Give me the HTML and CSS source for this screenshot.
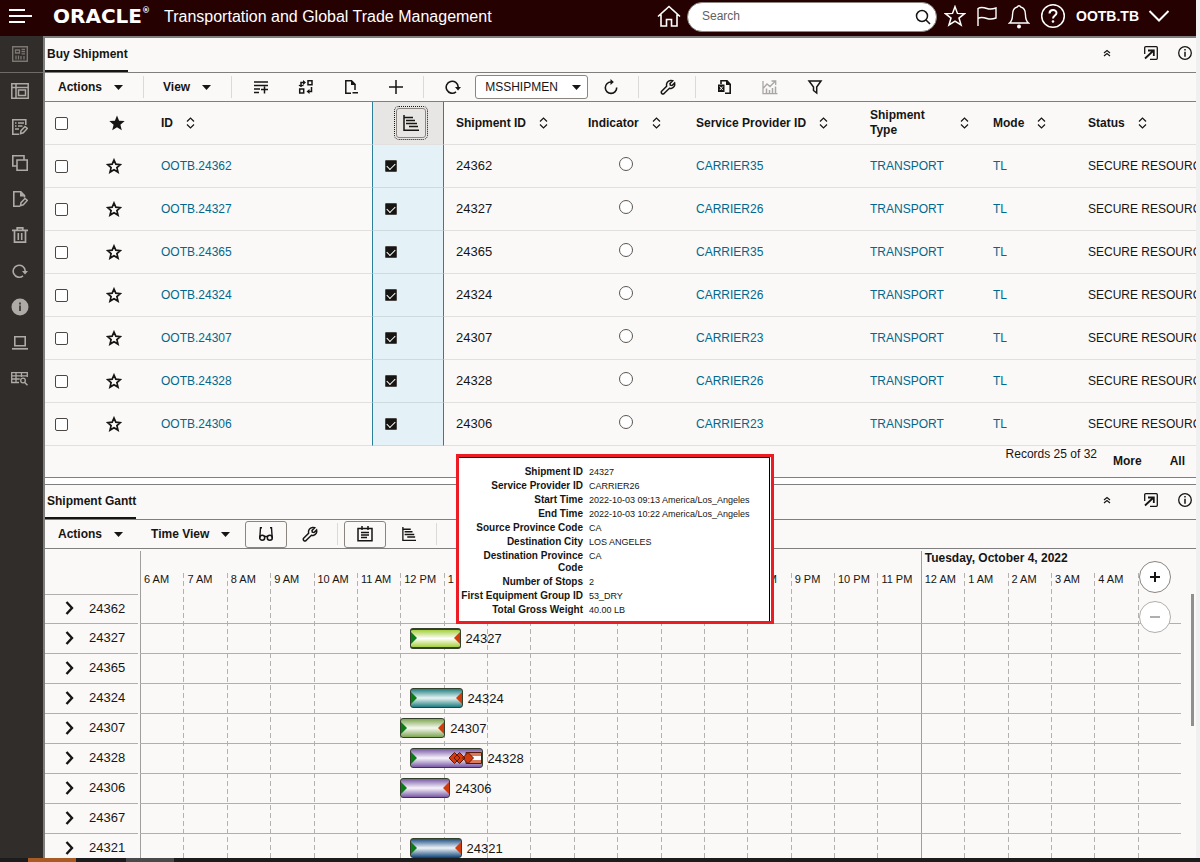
FILE: index.html
```html
<!DOCTYPE html>
<html lang="en">
<head>
<meta charset="utf-8">
<title>Transportation and Global Trade Management</title>
<link rel="stylesheet" href="styles.css">
</head>
<body>
<svg class="sprite" aria-hidden="true">
  <symbol id="caret" viewBox="0 0 9 5"><path d="M0 0h9L4.500 5z" fill="currentColor"/></symbol>
  <symbol id="sort" viewBox="0 0 9 12"><path d="M1 4.500L4.500 1 8 4.500M1 7.500L4.500 11 8 7.500" fill="none" stroke="currentColor" stroke-width="1.200"/></symbol>
  <symbol id="star" viewBox="0 0 16 16"><path d="M8 2l1.800 4.200 4.600.4-3.500 3 1.100 4.500L8 11.700l-4 2.400 1.100-4.500-3.500-3 4.600-.4z" fill="none" stroke="currentColor" stroke-width="1.700"/></symbol>
  <symbol id="star-full" viewBox="0 0 16 16"><path d="M8 .5l2.100 5.200 5.600.4-4.300 3.600 1.400 5.500L8 12.200l-4.800 3 1.400-5.500L.3 6.100l5.600-.4z" fill="currentColor"/></symbol>
  <symbol id="refresh" viewBox="0 0 16 16"><path d="M11 12.900A6 6 0 1 1 13.200 8" fill="none" stroke="currentColor" stroke-width="1.600"/><path d="M10 8h6l-3 3.500z" fill="currentColor"/></symbol>
  <symbol id="wrench" viewBox="0 0 16 16"><path d="M1.600 12.200l5-5C6 4.500 7.600 1.800 10.500 1.500c.8-.1 1.500 0 2.200.3L10 4.500l.3 1.700 1.700.3 2.600-2.600c.6 2.500-.6 5-3.400 5.500-.7.100-1.300.1-1.800-.1l-5.100 5a1.500 1.500 0 0 1-2.700-2.100z" fill="none" stroke="currentColor" stroke-width="1.500"/></symbol>
  <symbol id="gantt" viewBox="0 0 16 16"><path d="M1 0v15.200h15" fill="none" stroke="currentColor" stroke-width="1.500"/><path d="M1 2.500h9M3 5.500h9M3 8.500h11M6 11.500h9" fill="none" stroke="currentColor" stroke-width="1.700"/></symbol>
  <symbol id="collapse" viewBox="0 0 8 8"><path d="M1 4l3-2.500L7 4M1 7l3-2.500L7 7" fill="none" stroke="currentColor" stroke-width="1.200"/></symbol>
  <symbol id="popout" viewBox="0 0 16 16"><path d="M1.700 9V2.700a1 1 0 0 1 1-1h10.600a1 1 0 0 1 1 1v10.600a1 1 0 0 1-1 1H7" fill="none" stroke="currentColor" stroke-width="1.300"/><path d="M2 13.500L10 6M5 5.500h5.800V11" fill="none" stroke="currentColor" stroke-width="1.800"/></symbol>
  <symbol id="info" viewBox="0 0 16 16"><circle cx="8" cy="8" r="6.300" fill="none" stroke="currentColor" stroke-width="1.300"/><path d="M8 4v1.500M8 6.700v5" stroke="currentColor" stroke-width="1.500"/></symbol>
  <symbol id="chevron" viewBox="0 0 9 16"><path d="M1.500 2L7 8l-5.500 6" fill="none" stroke="currentColor" stroke-width="2.400"/></symbol>
</svg>
<div class="window">
<div class="app">
  <header class="topbar">
    <button class="icon-btn menu" aria-label="Menu"><svg width="24" height="16" viewBox="0 0 24 16"><path d="M0 2h16M0 8h23M0 14h16" stroke="currentColor" stroke-width="2"/></svg></button>
    <span class="logo">ORACLE<sup>®</sup></span>
    <h1>Transportation and Global Trade Management</h1>
    <nav class="top-actions" aria-label="Global">
      <button class="icon-btn" aria-label="Home"><svg width="24" height="24" viewBox="0 0 24 24"><path d="M1 12.500L12 2.500l11 10M4 10.500V22h5.500v-6.500h5V22H20V10.500" fill="none" stroke="currentColor" stroke-width="1.600"/></svg></button>
      <div class="search">
        <input type="search" placeholder="Search" aria-label="Search">
        <button class="icon-btn" aria-label="Run search"><svg width="16" height="16" viewBox="0 0 16 16"><circle cx="7" cy="7" r="5.500" fill="none" stroke="currentColor" stroke-width="1.500"/><path d="M11 11l4 4" stroke="currentColor" stroke-width="1.600"/></svg></button>
      </div>
      <button class="icon-btn" aria-label="Favorites"><svg width="22" height="22" viewBox="0 0 16 16"><path d="M8 1.200l1.800 4.900 5.200.2-4.100 3.200 1.500 5L8 11.700l-4.400 2.800 1.500-5L1 6.300l5.200-.2z" fill="none" stroke="currentColor" stroke-width="1.100"/></svg></button>
      <button class="icon-btn" aria-label="Flags"><svg width="22" height="22" viewBox="0 0 22 22"><path d="M2 21V3.500c3-2 6-1 9 0s5 1 9-.5V13c-4 1.500-6 1.500-9 .5s-6-2-9 0" fill="none" stroke="currentColor" stroke-width="1.400"/></svg></button>
      <button class="icon-btn" aria-label="Notifications"><svg width="22" height="26" viewBox="0 0 22 26"><path d="M1.500 20c2.500-2 3-4 3-8 0-5 2-7.500 4.800-8a1.800 1.800 0 0 1 3.400 0c2.800.5 4.800 3 4.800 8 0 4 .5 6 3 8z" fill="none" stroke="currentColor" stroke-width="1.400"/><circle cx="11" cy="23.500" r="2" fill="currentColor"/></svg></button>
      <button class="icon-btn" aria-label="Help"><svg width="26" height="26" viewBox="0 0 26 26"><circle cx="13" cy="13" r="11.300" fill="none" stroke="currentColor" stroke-width="1.500"/><path d="M9.500 10.500c0-4.500 7-4.500 7-.5 0 2.500-3.500 2.500-3.500 5.500" fill="none" stroke="currentColor" stroke-width="2"/><circle cx="13" cy="18.500" r="1.300" fill="currentColor"/></svg></button>
      <button class="icon-btn user">OOTB.TB<svg width="22" height="14" viewBox="0 0 22 14"><path d="M1.500 2L11 11.500 20.500 2" fill="none" stroke="currentColor" stroke-width="2"/></svg></button>
    </nav>
  </header>

  <div class="body">
    <nav class="sidebar" aria-label="Tools">
      <button class="icon-btn first" aria-label="Workbench"><svg width="16" height="16" viewBox="0 0 16 16"><path d="M.7.7h14.600v14.600H.7z" fill="none" stroke="currentColor" stroke-width="1.400"/><path d="M3.500 4h4v3h-4zM9.500 3.500h3.500M9.500 5.700h3.500M9.500 7.900h3.500M4 9.500v4M6.500 9.500v4M9 10v3.500M12 10v3.500" fill="none" stroke="currentColor" stroke-width="1.300"/></svg></button>
      <button class="icon-btn" aria-label="Layout"><svg width="18" height="16" viewBox="0 0 18 16"><path d="M.8.8h16.400v14.400H.8zM.8 4.500h16.400M5 .8v14.400M7.500 7h7v5.500h-7z" fill="none" stroke="currentColor" stroke-width="1.500"/></svg></button>
      <button class="icon-btn" aria-label="Edit list"><svg width="16" height="16" viewBox="0 0 16 16"><path d="M7 15.200H.8V.8h13V6" fill="none" stroke="currentColor" stroke-width="1.600"/><path d="M3 4h1.500M6 4h6M3 7h1.500M6 7h4.500M3 10h4" stroke="currentColor" stroke-width="1.500"/><path d="M8.500 14.700l.5-3L13 7.500l2.300 2-4 4.300z" fill="none" stroke="currentColor" stroke-width="1.500"/></svg></button>
      <button class="icon-btn" aria-label="Copy"><svg width="16" height="16" viewBox="0 0 16 16"><path d="M5 11H.8V.8H12V5M5 5h10.200v10.200H5z" fill="none" stroke="currentColor" stroke-width="1.600"/></svg></button>
      <button class="icon-btn" aria-label="Edit document"><svg width="16" height="16" viewBox="0 0 16 16"><path d="M8 15.200H1.800V.8h7l3.700 3.800v2" fill="none" stroke="currentColor" stroke-width="1.600"/><path d="M8 .5v5h5z" fill="currentColor"/><path d="M8.500 14.700l.5-3L13 7.500l2.300 2-4 4.300z" fill="none" stroke="currentColor" stroke-width="1.500"/></svg></button>
      <button class="icon-btn" aria-label="Delete"><svg width="16" height="16" viewBox="0 0 16 16"><path d="M0 3.300h16M5.200 3V.8h5.600V3M2.500 3.500v11.700h11V3.500" fill="none" stroke="currentColor" stroke-width="1.700"/><path d="M6.300 6v7M9.700 6v7" stroke="currentColor" stroke-width="1.600"/></svg></button>
      <button class="icon-btn" aria-label="Refresh"><svg width="16" height="16"><use href="#refresh"/></svg></button>
      <button class="icon-btn" aria-label="Information"><svg width="18" height="18" viewBox="0 0 18 18"><circle cx="9" cy="9" r="8.500" fill="currentColor"/><path d="M9 4.500v2M9 7.500V13" stroke="#312d2a" stroke-width="1.600"/></svg></button>
      <button class="icon-btn" aria-label="Computer"><svg width="16" height="14" viewBox="0 0 16 14"><path d="M2.800.8h10.400v9H2.800z" fill="none" stroke="currentColor" stroke-width="1.600"/><path d="M0 12.800h16" stroke="currentColor" stroke-width="1.700"/></svg></button>
      <button class="icon-btn" aria-label="Search table"><svg width="18" height="14" viewBox="0 0 18 14"><path d="M8 10.500H.7V.7H16.300V5M.7 3.800h15.600M.7 7h8M5 .7v9.800M10.500.7V5" fill="none" stroke="currentColor" stroke-width="1.300"/><circle cx="12" cy="8.500" r="2.300" fill="none" stroke="currentColor" stroke-width="1.300"/><path d="M13.500 10.300l3 3" stroke="currentColor" stroke-width="1.400"/></svg></button>
    </nav>

    <main class="main">
      <section class="panel" aria-labelledby="buy-title">
        <div class="tabs">
          <h2 id="buy-title">Buy Shipment</h2>
          <button class="icon-btn collapse" aria-label="Collapse"><svg width="8" height="8"><use href="#collapse"/></svg></button>
          <button class="icon-btn" aria-label="Detach"><svg width="16" height="16"><use href="#popout"/></svg></button>
          <button class="icon-btn" aria-label="Information"><svg width="16" height="16"><use href="#info"/></svg></button>
        </div>
        <div class="toolbar">
          <button class="menu-btn">Actions<svg width="9" height="5"><use href="#caret"/></svg></button>
          <span class="sep"></span>
          <button class="menu-btn">View<svg width="9" height="5"><use href="#caret"/></svg></button>
          <span class="sep"></span>
          <button class="tool" aria-label="Add row"><svg width="16" height="14" viewBox="0 0 16 14"><path d="M1 2h14M1 5.500h14M1 9h6M1 12.500h5M8 9.500h7M11.500 6.500v7" stroke="currentColor" stroke-width="1.500"/></svg></button>
          <button class="tool" aria-label="Swap"><svg width="16" height="16" viewBox="0 0 16 16"><path d="M10 1.700h4v4h-4zM1.700 10h4v4h-4zM3 8V3.500h3M13.500 8v4.500H11" fill="none" stroke="currentColor" stroke-width="1.500"/><path d="M5 1l3 2.500L5 6zM11.500 10l-3 2.500 3 2.500z" fill="currentColor"/><path d="M.8 6.500h4.700" stroke="currentColor" stroke-width="1.300"/></svg></button>
          <button class="tool" aria-label="Remove document"><svg width="14" height="16" viewBox="0 0 14 16"><path d="M7 14.300H1.800V1.700h5.700L11 5.200V11" fill="none" stroke="currentColor" stroke-width="1.500"/><path d="M7 1l5 5H7zM8.500 13H14v1.500H8.500z" fill="currentColor"/></svg></button>
          <button class="tool" aria-label="Add"><svg width="14" height="14" viewBox="0 0 14 14"><path d="M0 7h14M7 0v14" stroke="currentColor" stroke-width="1.500"/></svg></button>
          <span class="sep"></span>
          <button class="tool" aria-label="Refresh"><svg width="16" height="16"><use href="#refresh"/></svg></button>
          <span class="select"><select aria-label="Screen set"><option>MSSHIPMEN</option></select><svg width="9" height="5"><use href="#caret"/></svg></span>
          <button class="tool" aria-label="Reload"><svg width="16" height="16" viewBox="0 0 16 16"><path d="M13.700 8.500A5.700 5.700 0 1 1 8 3" fill="none" stroke="currentColor" stroke-width="1.600"/><path d="M7.500 0v6l3.300-3z" fill="currentColor"/></svg></button>
          <span class="sep"></span>
          <button class="tool" aria-label="Settings"><svg width="16" height="16"><use href="#wrench"/></svg></button>
          <span class="sep"></span>
          <button class="tool" aria-label="Export to Excel"><svg width="16" height="16" viewBox="0 0 16 16"><path d="M4 5V1.800h6l3.200 3.500v9H8" fill="none" stroke="currentColor" stroke-width="1.600"/><path d="M9 1l5 5H9zM1 5.500h6.500V13H1z" fill="currentColor"/><path d="M2.800 7.500l3 3.600M5.800 7.500l-3 3.600" stroke="#fbf9f8" stroke-width="1"/></svg></button>
          <button class="tool" aria-label="Chart" disabled><svg width="16" height="16" viewBox="0 0 16 16"><path d="M1 2v12.700h14.500M1.500 9l3.500-4 3 2.500L13 2.500M9.500 2h4.200v4" fill="none" stroke="currentColor" stroke-width="1.300"/><path d="M4.500 9.500V15M7.500 11v4M10.500 9v6M13.500 7.500V15" stroke="currentColor" stroke-width="1.500"/></svg></button>
          <button class="tool" aria-label="Filter"><svg width="16" height="16" viewBox="0 0 16 16"><path d="M2 2h12L9.700 8v6L6.500 11.500V8z" fill="none" stroke="currentColor" stroke-width="1.500"/></svg></button>
        </div>
        <div class="table-wrap">
          <table class="grid">
            <colgroup><col class="c-check"><col class="c-star"><col><col class="c-gantt"><col class="c-ship"><col class="c-ind"><col class="c-svc"><col class="c-type"><col class="c-mode"><col class="c-status"></colgroup>
            <thead>
              <tr>
                <th class="check"><input type="checkbox" aria-label="Select all"></th>
                <th><svg class="fav" width="16" height="16" role="img" aria-label="Favorite"><use href="#star-full"/></svg></th>
                <th><span class="head">ID<svg width="9" height="12"><use href="#sort"/></svg></span></th>
                <th class="mark"><button class="gantt-btn" aria-label="Show in Gantt"><svg width="16" height="16"><use href="#gantt"/></svg></button></th>
                <th><span class="head">Shipment ID<svg width="9" height="12"><use href="#sort"/></svg></span></th>
                <th><span class="head">Indicator<svg width="9" height="12"><use href="#sort"/></svg></span></th>
                <th><span class="head">Service Provider ID<svg width="9" height="12"><use href="#sort"/></svg></span></th>
                <th><span class="head">Shipment Type<svg width="9" height="12"><use href="#sort"/></svg></span></th>
                <th><span class="head">Mode<svg width="9" height="12"><use href="#sort"/></svg></span></th>
                <th><span class="head">Status<svg width="9" height="12"><use href="#sort"/></svg></span></th>
              </tr>
            </thead>
            <tbody>
              <tr><td class="check"><input type="checkbox" aria-label="Select 24362"></td><td class="star"><svg width="16" height="16"><use href="#star"/></svg></td><td><a href="#">OOTB.24362</a></td><td class="mark"><input type="checkbox" checked aria-label="Gantt 24362"></td><td class="num">24362</td><td class="ind"><span class="dot"></span></td><td><a href="#">CARRIER35</a></td><td><a href="#">TRANSPORT</a></td><td><a href="#">TL</a></td><td>SECURE RESOURCES</td></tr>
              <tr><td class="check"><input type="checkbox" aria-label="Select 24327"></td><td class="star"><svg width="16" height="16"><use href="#star"/></svg></td><td><a href="#">OOTB.24327</a></td><td class="mark"><input type="checkbox" checked aria-label="Gantt 24327"></td><td class="num">24327</td><td class="ind"><span class="dot"></span></td><td><a href="#">CARRIER26</a></td><td><a href="#">TRANSPORT</a></td><td><a href="#">TL</a></td><td>SECURE RESOURCES</td></tr>
              <tr><td class="check"><input type="checkbox" aria-label="Select 24365"></td><td class="star"><svg width="16" height="16"><use href="#star"/></svg></td><td><a href="#">OOTB.24365</a></td><td class="mark"><input type="checkbox" checked aria-label="Gantt 24365"></td><td class="num">24365</td><td class="ind"><span class="dot"></span></td><td><a href="#">CARRIER35</a></td><td><a href="#">TRANSPORT</a></td><td><a href="#">TL</a></td><td>SECURE RESOURCES</td></tr>
              <tr><td class="check"><input type="checkbox" aria-label="Select 24324"></td><td class="star"><svg width="16" height="16"><use href="#star"/></svg></td><td><a href="#">OOTB.24324</a></td><td class="mark"><input type="checkbox" checked aria-label="Gantt 24324"></td><td class="num">24324</td><td class="ind"><span class="dot"></span></td><td><a href="#">CARRIER26</a></td><td><a href="#">TRANSPORT</a></td><td><a href="#">TL</a></td><td>SECURE RESOURCES</td></tr>
              <tr><td class="check"><input type="checkbox" aria-label="Select 24307"></td><td class="star"><svg width="16" height="16"><use href="#star"/></svg></td><td><a href="#">OOTB.24307</a></td><td class="mark"><input type="checkbox" checked aria-label="Gantt 24307"></td><td class="num">24307</td><td class="ind"><span class="dot"></span></td><td><a href="#">CARRIER23</a></td><td><a href="#">TRANSPORT</a></td><td><a href="#">TL</a></td><td>SECURE RESOURCES</td></tr>
              <tr><td class="check"><input type="checkbox" aria-label="Select 24328"></td><td class="star"><svg width="16" height="16"><use href="#star"/></svg></td><td><a href="#">OOTB.24328</a></td><td class="mark"><input type="checkbox" checked aria-label="Gantt 24328"></td><td class="num">24328</td><td class="ind"><span class="dot"></span></td><td><a href="#">CARRIER26</a></td><td><a href="#">TRANSPORT</a></td><td><a href="#">TL</a></td><td>SECURE RESOURCES</td></tr>
              <tr><td class="check"><input type="checkbox" aria-label="Select 24306"></td><td class="star"><svg width="16" height="16"><use href="#star"/></svg></td><td><a href="#">OOTB.24306</a></td><td class="mark"><input type="checkbox" checked aria-label="Gantt 24306"></td><td class="num">24306</td><td class="ind"><span class="dot"></span></td><td><a href="#">CARRIER23</a></td><td><a href="#">TRANSPORT</a></td><td><a href="#">TL</a></td><td>SECURE RESOURCES</td></tr>
            </tbody>
          </table>
        </div>
        <div class="records">
          <span>Records 25 of 32</span>
          <button class="text-btn">More</button>
          <button class="text-btn">All</button>
        </div>
      </section>

      <section class="panel gantt-panel" aria-labelledby="gantt-title">
        <div class="tabs">
          <h2 id="gantt-title">Shipment Gantt</h2>
          <button class="icon-btn collapse" aria-label="Collapse"><svg width="8" height="8"><use href="#collapse"/></svg></button>
          <button class="icon-btn" aria-label="Detach"><svg width="16" height="16"><use href="#popout"/></svg></button>
          <button class="icon-btn" aria-label="Information"><svg width="16" height="16"><use href="#info"/></svg></button>
        </div>
        <div class="toolbar">
          <button class="menu-btn">Actions<svg width="9" height="5"><use href="#caret"/></svg></button>
          <button class="menu-btn">Time View<svg width="9" height="5"><use href="#caret"/></svg></button>
          <button class="tool boxed" aria-label="Find"><svg width="16" height="16" viewBox="0 0 16 16"><path d="M4 1.700H2.500L1.800 12M12 1.700h1.500l.7 10.300M6.500 10.500h3" fill="none" stroke="currentColor" stroke-width="1.400"/><circle cx="4.200" cy="11.700" r="2.500" fill="none" stroke="currentColor" stroke-width="1.500"/><circle cx="11.800" cy="11.700" r="2.500" fill="none" stroke="currentColor" stroke-width="1.500"/></svg></button>
          <button class="tool" aria-label="Settings"><svg width="16" height="16"><use href="#wrench"/></svg></button>
          <span class="sep"></span>
          <button class="tool boxed" aria-label="Calendar"><svg width="16" height="16" viewBox="0 0 16 16"><path d="M1 2.500h14v12.300H1zM5 0v4M11 0v4" fill="none" stroke="currentColor" stroke-width="1.500"/><path d="M4 6.500h8M4 9h8M4 11.500h6" stroke="currentColor" stroke-width="1.400"/></svg></button>
          <button class="tool" aria-label="Gantt"><svg width="14" height="14"><use href="#gantt"/></svg></button>
          <span class="sep"></span>
        </div>

        <div class="gantt">
          <ul class="names">
            <li><button aria-label="Expand 24362"><svg width="9" height="16"><use href="#chevron"/></svg></button>24362</li>
            <li><button aria-label="Expand 24327"><svg width="9" height="16"><use href="#chevron"/></svg></button>24327</li>
            <li><button aria-label="Expand 24365"><svg width="9" height="16"><use href="#chevron"/></svg></button>24365</li>
            <li><button aria-label="Expand 24324"><svg width="9" height="16"><use href="#chevron"/></svg></button>24324</li>
            <li><button aria-label="Expand 24307"><svg width="9" height="16"><use href="#chevron"/></svg></button>24307</li>
            <li><button aria-label="Expand 24328"><svg width="9" height="16"><use href="#chevron"/></svg></button>24328</li>
            <li><button aria-label="Expand 24306"><svg width="9" height="16"><use href="#chevron"/></svg></button>24306</li>
            <li><button aria-label="Expand 24367"><svg width="9" height="16"><use href="#chevron"/></svg></button>24367</li>
            <li><button aria-label="Expand 24321"><svg width="9" height="16"><use href="#chevron"/></svg></button>24321</li>
          </ul>
          <div class="chart">
            <div class="days"><span class="day first-day"></span><span class="day">Tuesday, October 4, 2022</span></div>
            <div class="hours">
              <span>6 AM</span><span>7 AM</span><span>8 AM</span><span>9 AM</span><span>10 AM</span><span>11 AM</span><span>12 PM</span><span>1 PM</span><span>2 PM</span><span>3 PM</span><span>4 PM</span><span>5 PM</span><span>6 PM</span><span>7 PM</span><span>8 PM</span><span>9 PM</span><span>10 PM</span><span>11 PM</span><span>12 AM</span><span>1 AM</span><span>2 AM</span><span>3 AM</span><span>4 AM</span><span></span>
            </div>
            <div class="lanes">
              <div class="lane"></div>
              <div class="lane"><div class="task" style="left:25.9%"><span class="bar lime active" style="width:51px"></span>24327</div></div>
              <div class="lane"></div>
              <div class="lane"><div class="task" style="left:25.9%"><span class="bar teal" style="width:53px"></span>24324</div></div>
              <div class="lane"><div class="task" style="left:25%"><span class="bar green" style="width:45px"></span>24307</div></div>
              <div class="lane"><div class="task" style="left:25.9%"><span class="bar purple stops" style="width:73px"><svg width="34" height="14" viewBox="0 0 34 14"><path d="M18 1.500h15.500v11H18z" fill="#d97a5c" stroke="#5a1a0a"/><path d="M24 5h9v4h-9z" fill="#fff"/><path d="M1 7l5.500-5.500L12 7l-5.500 5.500zM6 7l5.500-5.500L17 7l-5.500 5.500zM14.500 7L20 1.500 25.500 7 20 12.500z" fill="#d23c0c" stroke="#5a1a0a"/></svg></span>24328</div></div>
              <div class="lane"><div class="task" style="left:25%"><span class="bar purple" style="width:50px"></span>24306</div></div>
              <div class="lane"></div>
              <div class="lane"><div class="task" style="left:25.9%"><span class="bar blue" style="width:52px"></span>24321</div></div>
            </div>
          </div>
          <div class="zoom">
            <button aria-label="Zoom in"><svg width="12" height="12" viewBox="0 0 12 12"><path d="M1 6h10M6 1v10" stroke="currentColor" stroke-width="2"/></svg></button>
            <button aria-label="Zoom out" disabled><svg width="12" height="12" viewBox="0 0 12 12"><path d="M1 6h10" stroke="currentColor" stroke-width="2"/></svg></button>
          </div>
          <div class="thumb"></div>
        </div>

        <div class="tooltip" role="tooltip">
          <dl>
            <dt>Shipment ID</dt><dd>24327</dd>
            <dt>Service Provider ID</dt><dd>CARRIER26</dd>
            <dt>Start Time</dt><dd>2022-10-03 09:13 America/Los_Angeles</dd>
            <dt>End Time</dt><dd>2022-10-03 10:22 America/Los_Angeles</dd>
            <dt>Source Province Code</dt><dd>CA</dd>
            <dt>Destination City</dt><dd>LOS ANGELES</dd>
            <dt>Destination Province Code</dt><dd>CA</dd>
            <dt>Number of Stops</dt><dd>2</dd>
            <dt>First Equipment Group ID</dt><dd>53_DRY</dd>
            <dt>Total Gross Weight</dt><dd>40.00 LB</dd>
          </dl>
        </div>
      </section>
    </main>
  </div>
</div>
<footer class="taskbar"><span class="run"></span><span class="idle"></span></footer>
</div>
</body>
</html>
```
FILE: styles.css
```css
* { box-sizing: border-box; }
body {
  margin: 0;
  font: 12px/15px "Liberation Sans", Arial, sans-serif;
  color: #161513;
  background: #f0f0f0;
}
h1, h2, ul, dl, dd { margin: 0; padding: 0; }
button, input, select { font: inherit; color: inherit; margin: 0; padding: 0; }
button { background: none; border: 0; display: flex; align-items: center; justify-content: center; }
svg { display: block; flex: none; }
a { color: #00688c; text-decoration: none; }
.sprite { position: absolute; width: 0; height: 0; }

.window { height: 100vh; display: flex; flex-direction: column; }
.app { flex: 1; min-height: 0; margin-right: 4px; display: flex; flex-direction: column; background: #fbf9f8; }

/* Global header */
.topbar { flex: none; height: 36px; padding: 0 26px 4px 9px; display: flex; align-items: center; background: #260101; color: #fff; }
.menu { width: 44px; justify-content: flex-start; }
.logo { font: bold 20px/30px "DejaVu Sans", sans-serif; display: flex; width: 111px; }
.logo sup { font-size: 8px; line-height: 20px; }
.topbar h1 { font-size: 16px; font-weight: normal; white-space: nowrap; }
.top-actions { margin-left: auto; display: flex; align-items: center; gap: 10px; }
.search { display: flex; align-items: center; width: 250px; height: 30px; margin: 0 -3px -1px -4px; padding: 0 5px 0 14px; background: #fff; color: #161513; border: 1px solid #8b8580; border-radius: 15px; }
.search input { flex: 1; min-width: 0; border: 0; outline: 0; background: none; appearance: none; }
.search input::placeholder { color: #65605c; opacity: 1; }
.user { gap: 9px; font-size: 14px; font-weight: bold; }

.body { flex: 1; min-height: 0; display: flex; }
.sidebar { flex: none; width: 43px; padding-right: 3px; background: #312d2a; color: #aeaaa6; }
.sidebar button { width: 40px; height: 36px; }
.sidebar .first { width: 43px; height: 37px; padding-right: 3px; border-bottom: 1px solid #6f6b68; color: #7b7672; }
.main { flex: 1; min-width: 0; display: flex; flex-direction: column; border-top: 2px solid #7f7f7f; border-left: 2px solid #7f7f7f; }

/* Panels */
.panel { flex: none; border-bottom: 1px solid #7f7f7f; }
.tabs { height: 35px; display: flex; align-items: center; border-bottom: 1px solid #7f7f7f; padding-right: 3px; }
.tabs h2 { align-self: stretch; padding-left: 2px; font-size: 12px; line-height: 32px; border-bottom: 2px solid #161513; }
.tabs button { height: 29px; align-self: flex-start; }
.tabs .collapse { margin-left: auto; }
.tabs button + button { margin-left: 18px; }
.tabs .collapse + button { margin-left: 32px; }
.toolbar { height: 29px; display: flex; align-items: center; border-bottom: 1px solid #7f7f7f; }
.menu-btn { gap: 12px; height: 28px; padding: 0 15px 0 13px; font-weight: bold; }
.sep { width: 1px; height: 22px; margin: 0 6px 0 5px; background: #dcdad8; }
.tool { width: 45px; height: 28px; }
.tool:disabled { color: #a9a6a4; }
.boxed { width: 42px; height: 27px; border: 1px solid #8b8580; border-radius: 3px; }
.select { display: grid; align-items: center; width: 113px; height: 24px; }
.select select { grid-area: 1 / 1; height: 24px; padding-left: 9px; appearance: none; background: #fff; border: 1px solid #8b8580; border-radius: 3px; }
.select svg { grid-area: 1 / 1; justify-self: end; margin-right: 7px; pointer-events: none; }

/* Shipment table */
.table-wrap { overflow: hidden; }
.grid { width: 100%; table-layout: fixed; border-collapse: separate; border-spacing: 0; }
.c-check, .c-star { width: 52px; }
.c-gantt { width: 72px; }
.c-ship { width: 132px; }
.c-ind { width: 108px; }
.c-svc { width: 174px; }
.c-type { width: 123px; }
.c-mode { width: 95px; }
.c-status { width: 120px; }
.grid th, .grid td { height: 43px; padding: 0 12px; text-align: left; white-space: nowrap; border-bottom: 1px solid #e2e0de; }
.grid td:last-child { padding-right: 0; overflow: hidden; }
.grid th { white-space: normal; }
.head { display: flex; align-items: center; gap: 13px; }
.grid .check { padding-left: 10px; }
.grid .star { padding-left: 9px; }
.grid .mark { border-left: 1px solid #2b7f9a; border-right: 1px solid #2b7f9a; }
.grid th.mark { background: #e8e6e4; padding: 0 0 0 23px; }
.grid td.mark { background: #e4f1f7; border-bottom-color: #cddbe1; }
.grid .num { padding-bottom: 1px; font-size: 13px; }
.grid .ind { padding: 0 20px 4px 12px; text-align: center; }
.dot { display: inline-block; vertical-align: middle; width: 14px; height: 14px; border: 1px solid #5b5652; border-radius: 50%; background: #fff; }
input[type="checkbox"] { appearance: none; display: block; width: 13px; height: 13px; border: 1px solid #4b4744; border-radius: 2px; background: #fff; }
input[type="checkbox"]:checked { width: 12px; height: 12px; border-radius: 1px; background: #161513; }
input[type="checkbox"]:checked::after { content: ""; display: block; width: 7px; height: 4px; margin: 2px 0 0 1px; border-left: 1px solid #fff; border-bottom: 1px solid #fff; transform: rotate(-45deg); }
.gantt-btn { width: 30px; height: 30px; border: 1px solid #8b8580; border-radius: 3px; outline: 1px dotted #161513; outline-offset: 1px; }
.records { display: flex; height: 31px; padding: 1px 11px 0 0; justify-content: flex-end; align-items: flex-start; }
.records span { margin-right: 16px; }
.text-btn { font-weight: bold; height: 29px; }
.text-btn + .text-btn { margin-left: 28px; }

/* Gantt */
.gantt-panel { position: relative; flex: 1; min-height: 0; display: flex; flex-direction: column; margin-top: 6px; border-top: 1px solid #7f7f7f; border-bottom: 0; box-shadow: 0 -6px #fff; }
.gantt-panel .tabs, .gantt-panel .toolbar { flex: none; }
.gantt { position: relative; flex: 1; min-height: 0; display: flex; gap: 2px; padding-right: 15px; overflow: hidden; font-size: 13px; }
.names { width: 93px; padding-top: 45px; list-style: none; }
.names li { display: flex; align-items: center; gap: 15px; height: 30px; padding: 0 0 2px 20px; border-bottom: 1px solid #b1afad; }
.names li:first-child { border-top: 1px solid #b1afad; }
.names button { width: 9px; }
.chart { position: relative; flex: 1; min-width: 0; padding-top: 2px; }
.days { display: grid; grid-template-columns: 3fr 1fr; height: 22px; font-size: 12px; font-weight: bold; }
.day { padding-left: 3px; border-left: 1px solid #a09e9c; white-space: nowrap; }
.hours { display: grid; grid-template-columns: repeat(24, minmax(0, 1fr)); height: 300px; font-size: 11px; }
.hours span { padding: 0 0 0 4px; white-space: nowrap; line-height: 12px; background: repeating-linear-gradient(#b4b2b0 0 5px, transparent 5px 8px) left / 1px 100% no-repeat; }
.hours span:first-child, .hours span:nth-child(19) { background: linear-gradient(#a09e9c, #a09e9c) left / 1px 100% no-repeat; }
.lanes { position: absolute; top: 45px; left: 0; right: 0; }
.lane { position: relative; height: 30px; border-bottom: 1px solid #b1afad; }
.task { position: absolute; top: 4px; display: flex; align-items: center; gap: 5px; height: 20px; }
.bar { display: flex; align-items: center; justify-content: space-between; height: 20px; border: 1px solid #33402c; border-radius: 3px; }
.bar::before { content: ""; border: 6px solid transparent; border-left-color: #0b7d16; border-right: 0; }
.bar::after { content: ""; border: 6px solid transparent; border-right-color: #d23c0c; border-left: 0; }
.stops { justify-content: flex-start; }
.stops svg { margin-left: auto; }
.stops::after { display: none; }
.active { height: 21px; border-width: 2px 1px; }
.lime { background: linear-gradient(#a5cf3e, #fff 50%, #eef6d2 60%, #a5cf3e); }
.teal { background: linear-gradient(#1f7d80, #e8f3f3 50%, #1f7d80); }
.green { background: linear-gradient(#7fa653, #f5f9ef 50%, #7fa653); }
.purple { background: linear-gradient(#7a5aa5, #f7f4fb 50%, #7a5aa5); }
.blue { background: linear-gradient(#1f4f80, #eef3f8 50%, #1f4f80); }
.zoom { position: absolute; top: 12px; right: 25px; display: grid; gap: 8px; }
.zoom button { width: 32px; height: 32px; border: 1px solid #8b8580; border-radius: 50%; background: #fff; }
.zoom button:disabled { color: #b1afad; border-color: #b1afad; }
.thumb { position: absolute; top: 45px; right: 2px; width: 3px; height: 132px; background: #8f8f8f; }

.tooltip { position: absolute; top: -31px; left: 411px; width: 318px; padding-right: 1px; border: 3px solid #ed1c24; background: #fff; }
.tooltip dl { display: grid; grid-template-columns: 124px 1fr; gap: 2px 6px; padding: 8px 0 5px; border-top: 1px solid #000; border-right: 1px solid #000; font-size: 9px; line-height: 12px; }
.tooltip dt { font-size: 10px; font-weight: bold; text-align: right; }

.taskbar { flex: none; height: 4px; display: flex; gap: 50px; padding-left: 28px; background: #1c1c1c; }
.taskbar span { width: 48px; }
.run { background: #a85b22; }
.idle { background: #4a4a4a; }
```
